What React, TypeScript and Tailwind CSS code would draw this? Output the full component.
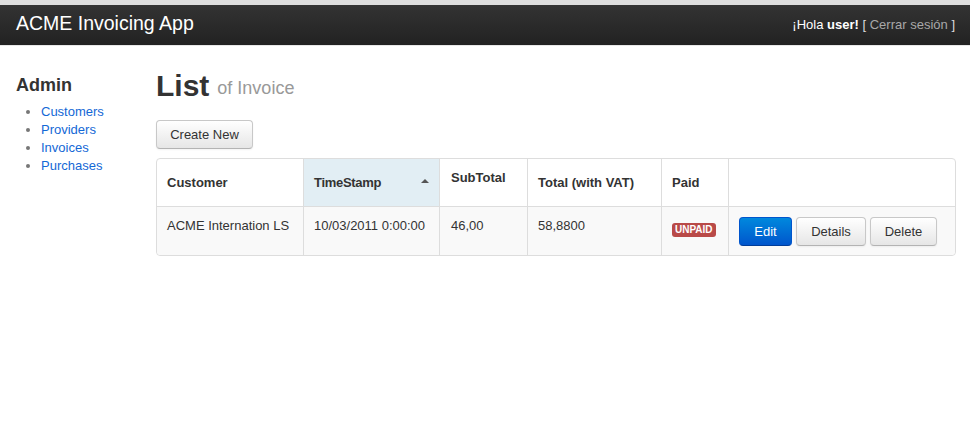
import React from "react";

const btn =
  "h-[29px] px-[13px] rounded-[4px] border text-[13px] leading-none whitespace-nowrap";
const btnDefault =
  btn +
  " border-[#c8c8c8] border-b-[#b3b3b3] bg-gradient-to-b from-white to-[#e6e6e6] text-[#333] shadow-[inset_0_1px_0_rgba(255,255,255,0.2),0_1px_2px_rgba(0,0,0,0.05)]";

export default function App() {
  return (
    <div className="min-h-[430px] bg-white text-[#333] font-['Liberation_Sans',Arial,sans-serif] text-[13px]">
      <div className="h-[5px] bg-[#dedede]" />
      <div className="h-[40px] bg-gradient-to-b from-[#333333] to-[#222222] border-b border-[#e8e8e8] box-content flex items-center justify-between px-4">
        <div className="text-white text-[19.5px] leading-none mt-[-2px]">ACME Invoicing App</div>
        <div className="text-[13px] text-[#e0e0e0] mr-[-1px]">
          <span className="text-white">¡Hola <b>user!</b></span>{" "}
          <span className="text-[#dddddd]">[</span>{" "}
          <span className="text-[#a8a8a8]">Cerrar sesión</span>{" "}
          <span className="text-[#dddddd]">]</span>
        </div>
      </div>
      <div className="flex px-4 pt-[27px]">
        <div className="w-[140px] shrink-0">
          <div className="text-[18px] font-bold leading-[24px]">Admin</div>
          <ul className="list-disc pl-[25px] mt-[6px] text-[13px] leading-[18px] marker:text-[#777]">
            <li><a className="text-[#1368d6]">Customers</a></li>
            <li><a className="text-[#1368d6]">Providers</a></li>
            <li><a className="text-[#1368d6]">Invoices</a></li>
            <li><a className="text-[#1368d6]">Purchases</a></li>
          </ul>
        </div>
        <div className="flex-1 min-w-0">
          <div className="flex items-baseline gap-[8px] h-[36px] mt-[-5px]">
            <span className="text-[30px] font-bold leading-[36px] text-[#333]">List</span>
            <span className="text-[18px] text-[#999] relative top-[-2px]">of Invoice</span>
          </div>
          <div className="mt-[16px] flex">
            <button className={btnDefault + " h-[28px] w-[97px] px-0 block"}>Create New</button>
          </div>
          <table className="mt-[9px] w-[800px] border-separate border-spacing-0 border border-[#dddddd] rounded-[4px] text-[13px] leading-[18px]">
            <thead>
              <tr className="h-[47px]">
                <th className="w-[146px] text-left font-bold pl-[10px] align-middle">Customer</th>
                <th className="w-[136px] text-left font-bold pl-[10px] align-middle border-l border-[#dddddd] bg-[#e2eef4] relative">
                  <span className="tracking-[-0.3px]">TimeStamp</span>
                  <span className="absolute right-[10px] top-[20px] w-0 h-0 border-l-[4px] border-r-[4px] border-b-[4px] border-l-transparent border-r-transparent border-b-[#555]" />
                </th>
                <th className="w-[88px] text-left font-bold pl-[11px] align-top pt-[10px] border-l border-[#dddddd]">SubTotal</th>
                <th className="w-[134px] text-left font-bold pl-[10px] align-middle border-l border-[#dddddd]">Total (with VAT)</th>
                <th className="w-[67px] text-left font-bold pl-[10px] align-middle border-l border-[#dddddd]">Paid</th>
                <th className="border-l border-[#dddddd]" />
              </tr>
            </thead>
            <tbody>
              <tr className="bg-[#f9f9f9]">
                <td className="border-t border-[#dddddd] pl-[10px] pt-[10px] align-top rounded-bl-[4px]">ACME Internation LS</td>
                <td className="border-t border-l border-[#dddddd] pl-[10px] pt-[10px] align-top">10/03/2011 0:00:00</td>
                <td className="border-t border-l border-[#dddddd] pl-[11px] pt-[10px] align-top">46,00</td>
                <td className="border-t border-l border-[#dddddd] pl-[10px] pt-[10px] align-top">58,8800</td>
                <td className="border-t border-l border-[#dddddd] pl-[10px] pt-[13px] align-top">
                  <span className="inline-block bg-[#b94a48] text-white text-[10px] font-bold leading-[14px] px-[3px] rounded-[3px]">UNPAID</span>
                </td>
                <td className="border-t border-l border-[#dddddd] pl-[10px] pt-[10px] pb-[9px] align-top rounded-br-[4px]">
                  <div className="flex gap-[4px]">
                    <button className={btn + " w-[53px] px-0 border-[#0055cc] border-b-[#003d99] bg-gradient-to-b from-[#0088dd] to-[#0055cc] text-white"}>Edit</button>
                    <button className={btnDefault + " w-[70px] px-0"}>Details</button>
                    <button className={btnDefault + " w-[67px] px-0"}>Delete</button>
                  </div>
                </td>
              </tr>
            </tbody>
          </table>
        </div>
      </div>
    </div>
  );
}
